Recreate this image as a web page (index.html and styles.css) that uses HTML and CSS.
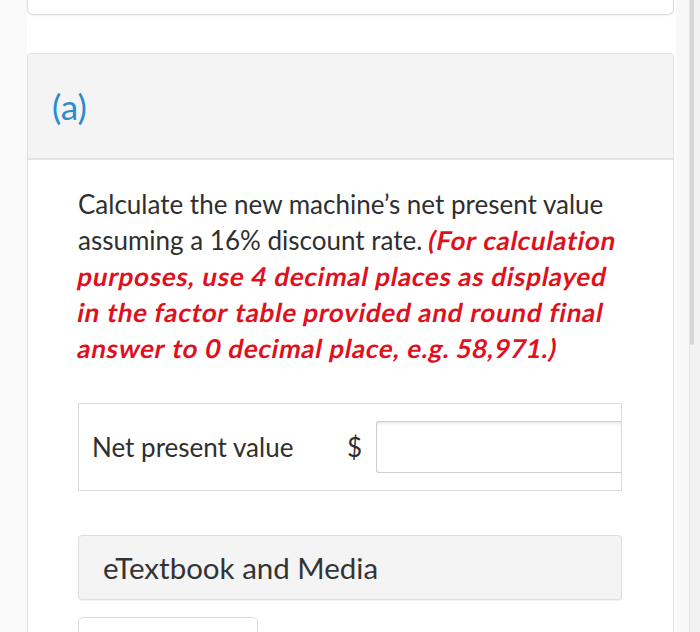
FILE: index.html
```html
<!DOCTYPE html>
<html>
<head>
<meta charset="utf-8">
<link rel="stylesheet" href="styles.css">
</head>
<body>
<div class="page">
  <div class="gutter"></div>
  <main class="main">
    <div class="prev-card"></div>
    <section class="part">
      <header class="part-head"><span class="part-label">(a)</span></header>
      <div class="part-body">
        <p class="question">Calculate the new machine’s net present value assuming a 16% discount rate. <span class="hint"><span class="w">(For</span> <span class="w">calculation</span> <span class="w">purposes,</span> <span class="w">use</span> <span class="w">4</span> <span class="w">decimal</span> <span class="w">places</span> <span class="w">as</span> <span class="w">displayed</span> <span class="w">in</span> <span class="w">the</span> <span class="w">factor</span> <span class="w">table</span> <span class="w">provided</span> <span class="w">and</span> <span class="w">round</span> <span class="w">final</span> <span class="w">answer</span> <span class="w">to</span> <span class="w">0</span> <span class="w">decimal</span> <span class="w">place,</span> <span class="w">e.g.</span> <span class="w">58,971.)</span></span></p>
        <div class="answer-box">
          <span class="answer-label">Net present value</span>
          <span class="currency">$</span>
          <span class="answer-input"></span>
        </div>
        <div class="media-btn">eTextbook and Media</div>
        <div class="next-btn"></div>
      </div>
    </section>
  </main>
  <div class="scroll-track"><div class="scroll-thumb"></div></div>
</div>
</body>
</html>
```
FILE: styles.css
```css
html, body {
  margin: 0;
  padding: 0;
  height: 632px;
  overflow: hidden;
  background: #f9f9f9;
  font-family: Lato, "Liberation Sans", sans-serif;
  color: #333;
}
.page {
  display: flex;
  height: 632px;
  position: relative;
}
.gutter {
  width: 27px;
  flex: none;
  background: #f9f9f9;
}
.main {
  width: 647px;
  flex: none;
  background: #fff;
}
.prev-card {
  height: 14px;
  border: 1px solid #dcdcdc;
  border-top: none;
  border-radius: 0 0 6px 6px;
  box-shadow: 0 1px 2px rgba(0,0,0,0.06);
}
.part {
  margin-top: 38px;
  border: 1px solid #e0e0e0;
  border-bottom: none;
  border-radius: 4px 4px 0 0;
}
.part-head {
  height: 104px;
  background: #f4f4f4;
  border-bottom: 2px solid #e3e3e3;
  display: flex;
  align-items: center;
  padding-left: 24px;
}
.part-label {
  font-size: 35px;
  color: #2a8ccd;
  font-weight: 400;
}
.part-body {
  padding: 26px 48px 0 50px;
}
.question {
  margin: 0;
  font-size: 26px;
  line-height: 36px;
  color: #2f2f2f;
}
.hint {
  color: #e0101c;
  font-weight: 700;
  letter-spacing: 0.7px;
}
.hint .w {
  display: inline-block;
  transform: skewX(-11deg);
}
.answer-box {
  margin-top: 37px;
  height: 86px;
  border: 1px solid #dcdcdc;
  display: flex;
  align-items: center;
  padding-left: 13px;
  margin-right: 3px;
}
.answer-label {
  font-size: 26px;
  color: #2f2f2f;
  width: 255px;
}
.currency {
  font-size: 26px;
  color: #2f2f2f;
  width: 29px;
}
.answer-input {
  flex: 1;
  height: 50px;
  border: 1px solid #cfcfcf;
  border-right: none;
  border-radius: 3px 0 0 3px;
  box-shadow: inset 0 2px 2px rgba(0,0,0,0.08);
}
.media-btn {
  margin-top: 44px;
  margin-right: 3px;
  height: 63px;
  border: 1px solid #dedede;
  border-radius: 4px;
  background: #f4f4f4;
  display: flex;
  align-items: center;
  padding-left: 24px;
  font-size: 29.5px;
  color: #333;
  box-shadow: 0 1px 1px rgba(0,0,0,0.05);
}
.next-btn {
  margin-top: 17px;
  width: 178px;
  height: 40px;
  border: 1px solid #dcdcdc;
  border-radius: 5px 5px 0 0;
}
.scroll-track {
  width: 26px;
  flex: none;
  background: linear-gradient(to right, #fff 0, #fff 2px, #f8f8f8 2px, #f8f8f8 15px, #e6e6e6 15px, #e6e6e6 16px, #f2f2f2 16px);
  position: relative;
}
.scroll-thumb {
  position: absolute;
  left: 16px;
  top: 0;
  width: 4px;
  height: 345px;
  background: #d6d6d6;
  border-radius: 0 0 2px 2px;
}
```
